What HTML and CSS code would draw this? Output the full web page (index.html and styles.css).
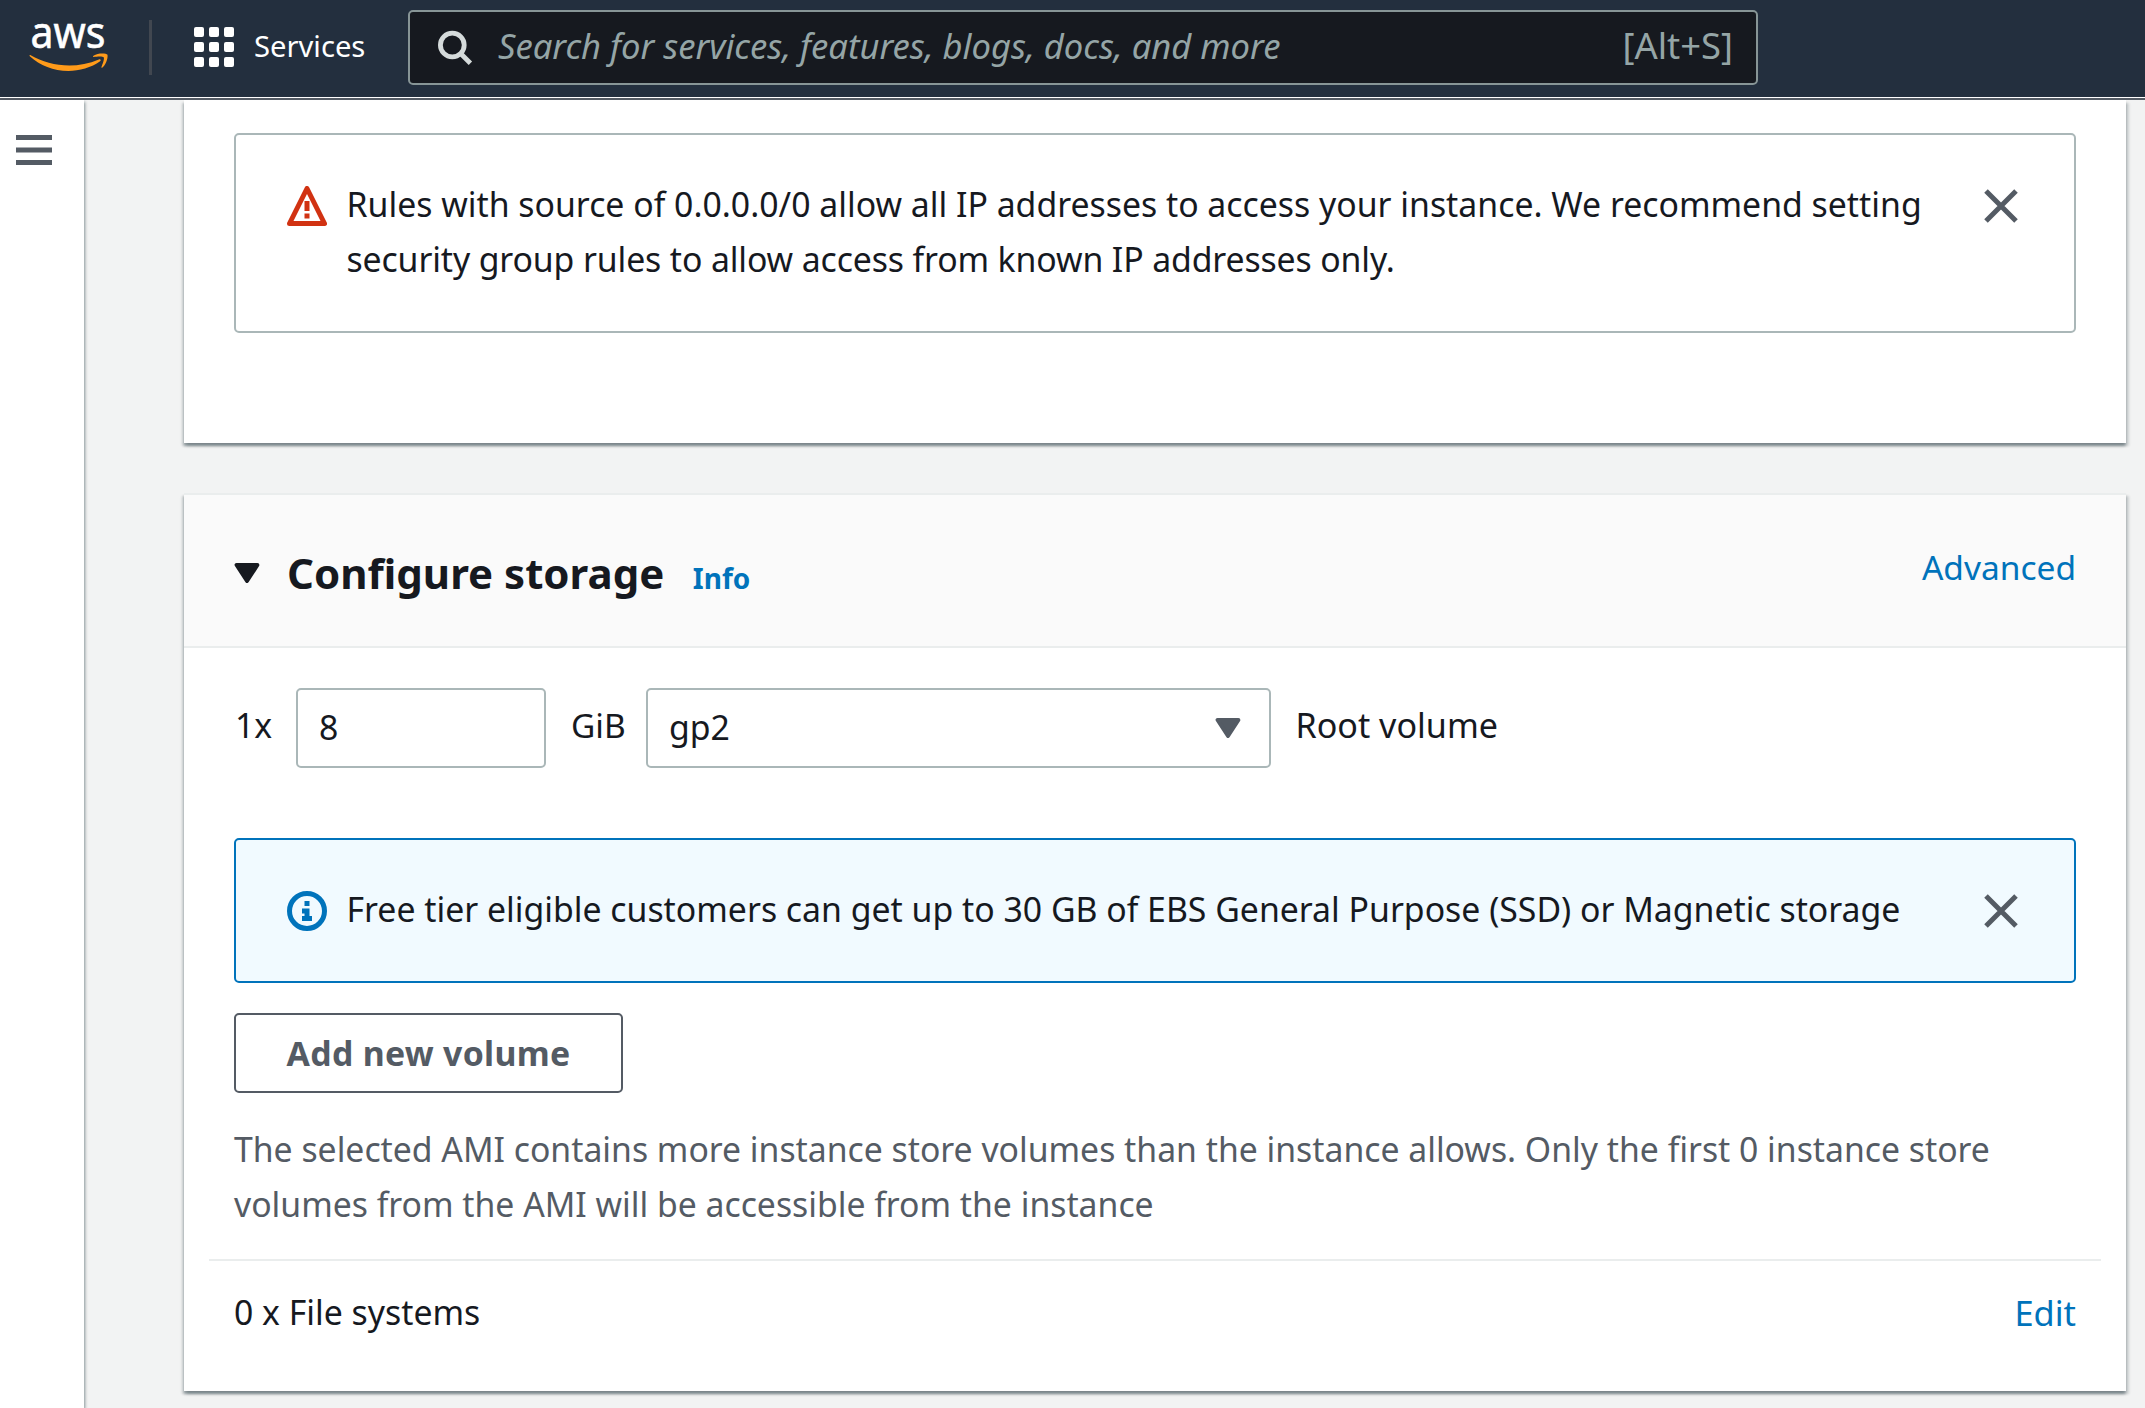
FILE: index.html
```html
<!DOCTYPE html>
<html lang="en">
<head>
<meta charset="utf-8">
<title>Launch an instance</title>
<link rel="stylesheet" href="styles.css">
</head>
<body>
<header class="topbar">
  <a class="logo" aria-label="AWS">
    <svg width="80" height="73" viewBox="0 -23 80 73">
      <text class="logo-text" x="1.5" y="24.5" textLength="75" lengthAdjust="spacingAndGlyphs">aws</text>
      <g fill="#ff9b1a" transform="translate(0 1) scale(.26)">
        <path d="M273.5,143.7c-32.9,24.3-80.7,37.2-121.8,37.2c-57.6,0-109.5-21.3-148.7-56.7c-3.1-2.8-0.3-6.6,3.4-4.4c42.4,24.6,94.7,39.5,148.8,39.5c36.5,0,76.6-7.6,113.5-23.2C274.2,133.6,278.9,139.7,273.5,143.7z"/>
        <path d="M287.2,128.1c-4.2-5.4-27.8-2.6-38.5-1.3c-3.2,0.4-3.7-2.4-0.8-4.5c18.8-13.2,49.7-9.4,53.3-5c3.6,4.5-1,35.4-18.6,50.2c-2.7,2.3-5.3,1.1-4.1-1.9C282.5,155.7,291.4,133.4,287.2,128.1z"/>
      </g>
    </svg>
  </a>
  <span class="topbar-divider"></span>
  <a class="services">
    <svg width="40" height="40" viewBox="0 0 40 40" fill="#fff">
      <rect x="0" y="0" width="10" height="10" rx="2"/><rect x="15" y="0" width="10" height="10" rx="2"/><rect x="30" y="0" width="10" height="10" rx="2"/>
      <rect x="0" y="15" width="10" height="10" rx="2"/><rect x="15" y="15" width="10" height="10" rx="2"/><rect x="30" y="15" width="10" height="10" rx="2"/>
      <rect x="0" y="30" width="10" height="10" rx="2"/><rect x="15" y="30" width="10" height="10" rx="2"/><rect x="30" y="30" width="10" height="10" rx="2"/>
    </svg>
    <span>Services</span>
  </a>
  <div class="search">
    <svg width="36" height="36" viewBox="0 0 36 36" fill="none" stroke="#d5dbdb" stroke-width="4.8">
      <circle cx="15.3" cy="15" r="11.9"/><path d="M23.4 23.2L33.4 33.2"/>
    </svg>
    <span class="search-hint">Search for services, features, blogs, docs, and more</span>
    <span class="search-key">[Alt+S]</span>
  </div>
</header>

<div class="layout">
  <nav class="sidebar">
    <svg width="36" height="30" viewBox="0 0 36 30" fill="#545b64">
      <rect width="36" height="5"/><rect y="12.5" width="36" height="5"/><rect y="25" width="36" height="5"/>
    </svg>
  </nav>

  <main class="content">
    <section class="panel panel-network">
      <div class="alert">
        <svg class="alert-icon" viewBox="0 0 16 16" fill="none" stroke="#d13212" stroke-width="2">
          <path stroke-linejoin="round" d="M8 1l7 14H1L8 1z"/><path d="M8 6v4M8 11v2"/>
        </svg>
        <p class="alert-text">Rules with source of 0.0.0.0/0 allow all IP addresses to access your instance. We recommend setting<br><span class="tight">security group rules to allow access from known IP addresses only.</span></p>
        <svg class="close" viewBox="0 0 16 16" fill="none" stroke="#545b64" stroke-width="2">
          <path d="M2 2l12 12M14 2L2 14"/>
        </svg>
      </div>
    </section>

    <section class="panel panel-storage">
      <div class="panel-header">
        <svg class="caret" width="26" height="20" viewBox="0 0 26 20" fill="#16191f" stroke="#16191f" stroke-width="4" stroke-linejoin="round">
          <path d="M2.6 2H23.4L13 18z"/>
        </svg>
        <h2>Configure storage</h2>
        <a class="info">Info</a>
        <a class="link advanced">Advanced</a>
      </div>
      <div class="volume-row">
        <span class="count">1x</span>
        <span class="field size-field">8</span>
        <span class="unit">GiB</span>
        <span class="field type-field">gp2
          <svg width="26" height="20" viewBox="0 0 26 20" fill="#545b64" stroke="#545b64" stroke-width="4" stroke-linejoin="round">
            <path d="M2.6 2H23.4L13 18z"/>
          </svg>
        </span>
        <span class="role">Root volume</span>
      </div>
      <div class="alert alert-info">
        <svg class="alert-icon" viewBox="0 0 16 16" fill="none" stroke="#0073bb" stroke-width="2">
          <circle cx="8" cy="8" r="7"/><path d="M8 11V8H6M10 11H6M8 4v2"/>
        </svg>
        <p class="alert-text">Free tier eligible customers can get up to 30 GB of EBS General Purpose (SSD) or Magnetic storage</p>
        <svg class="close" viewBox="0 0 16 16" fill="none" stroke="#545b64" stroke-width="2">
          <path d="M2 2l12 12M14 2L2 14"/>
        </svg>
      </div>
      <button class="add">Add new volume</button>
      <p class="note">The selected AMI contains more instance store volumes than the instance allows. Only the first 0 instance store<br>volumes from the AMI will be accessible from the instance</p>
      <div class="file-systems">
        <span>0 x File systems</span>
        <a class="link edit">Edit</a>
      </div>
    </section>
  </main>
</div>
</body>
</html>
```
FILE: styles.css
```css
* {
  box-sizing: border-box;
}

body {
  margin: 0;
  height: 1408px;
  overflow: hidden;
  background: #f2f3f3;
  color: #16191f;
  font: 33.8px/55px "Noto Sans", "Open Sans", sans-serif;
}

h2,
p {
  margin: 0;
}

svg {
  display: block;
  flex: none;
}

.topbar {
  display: flex;
  height: 98px;
  padding-left: 28.5px;
  background: #232f3e;
  border-bottom: 1px solid #fff;
}

.logo-text {
  fill: #fff;
  stroke: #fff;
  stroke-width: 0.6px;
  font-size: 44px;
  font-weight: 400;
}

.topbar-divider {
  width: 3px;
  height: 55px;
  margin: 20px 42px 0 40.5px;
  background: #414750;
}

.services {
  display: flex;
  gap: 20px;
  width: 214px;
  color: #fff;
  font-size: 29.2px;
}

.services svg {
  margin-top: 27px;
}

.services span {
  margin-top: 19px;
}

.search {
  display: flex;
  width: 1350px;
  height: 75px;
  margin-top: 10px;
  padding: 0 23px 0 27px;
  border: 2px solid #879596;
  border-radius: 5px;
  background: #16191f;
  color: #95a5a6;
}

.search svg {
  margin-top: 18px;
}

.search-hint {
  flex: 1;
  margin: 6px 0 0 25px;
  font-size: 34.6px;
  font-style: italic;
}

.search-key {
  margin-top: 6px;
  font-size: 36.4px;
}

.layout {
  display: flex;
  height: 1310px;
  border-top: 2px solid #545b64;
}

.sidebar {
  flex: none;
  width: 84px;
  padding: 35px 0 0 16px;
  background: #fff;
  box-shadow: 1px 2px 3px rgba(0, 28, 36, 0.45);
}

.content {
  display: flex;
  flex-direction: column;
  gap: 50px;
  width: 2042px;
  padding-left: 100px;
  clip-path: inset(0 -20px 0 0);
}

.panel {
  flex: none;
  background: #fff;
  box-shadow: 0 2.5px 2.5px rgba(0, 28, 36, 0.3), 2.5px 2.5px 2.5px rgba(0, 28, 36, 0.15), -2.5px 2.5px 2.5px rgba(0, 28, 36, 0.15);
}

.panel-network {
  height: 343px;
  padding: 33px 50px 0;
}

.panel-storage {
  height: 898px;
  border-top: 2px solid #eaeded;
}

.alert {
  display: flex;
  height: 200px;
  padding: 0 53px 0 51px;
  border: 2px solid #aab7b8;
  border-radius: 5px;
}

.alert-icon,
.close {
  width: 40px;
  height: 40px;
  margin-top: 51px;
}

.alert-text {
  flex: 1;
  margin: 42px 0 0 19.5px;
  white-space: nowrap;
}

.tight {
  letter-spacing: -0.12px;
}

.panel-header {
  display: flex;
  height: 153px;
  padding: 0 50px;
  background: #fafafa;
  border-bottom: 2px solid #eaeded;
}

.caret {
  margin-top: 68px;
}

.panel-header h2 {
  margin: 50px 0 0 27px;
  font-size: 42px;
  font-weight: 700;
}

.info {
  margin: 56px 0 0 28.5px;
  color: #0073bb;
  font-size: 28px;
  font-weight: 700;
}

.link {
  margin-left: auto;
  color: #0073bb;
}

.advanced {
  margin-top: 45px;
  font-size: 33.5px;
}

.edit {
  font-size: 34.4px;
}

.volume-row {
  display: flex;
  height: 80px;
  margin: 40px 50px 70px;
  line-height: 75px;
}

.count {
  width: 62px;
  padding-left: 1px;
}

.field {
  display: flex;
  justify-content: space-between;
  padding: 0 28px 0 21px;
  border: 2px solid #aab7b8;
  border-radius: 5px;
}

.size-field {
  width: 250px;
}

.unit {
  width: 100px;
  padding-left: 25px;
  font-size: 33.4px;
}

.type-field {
  width: 625px;
}

.type-field svg {
  margin-top: 28px;
}

.role {
  padding-left: 24.5px;
  font-size: 34.1px;
}

.alert-info {
  height: 145px;
  margin: 0 50px;
  background: #f1faff;
  border-color: #0073bb;
}

.add {
  display: block;
  width: 389px;
  height: 80px;
  margin: 30px 50px 29px;
  padding: 0;
  border: 2px solid #545b64;
  border-radius: 5px;
  background: #fff;
  color: #545b64;
  font: 700 33.8px/74px "Noto Sans", "Open Sans", sans-serif;
  letter-spacing: 0.3px;
}

.note {
  margin: 0 50px;
  color: #545b64;
  font-size: 33.76px;
  white-space: nowrap;
}

.file-systems {
  display: flex;
  margin: 27px 25px 0;
  padding: 24px 25px 0;
  border-top: 2px solid #eaeded;
}
```
